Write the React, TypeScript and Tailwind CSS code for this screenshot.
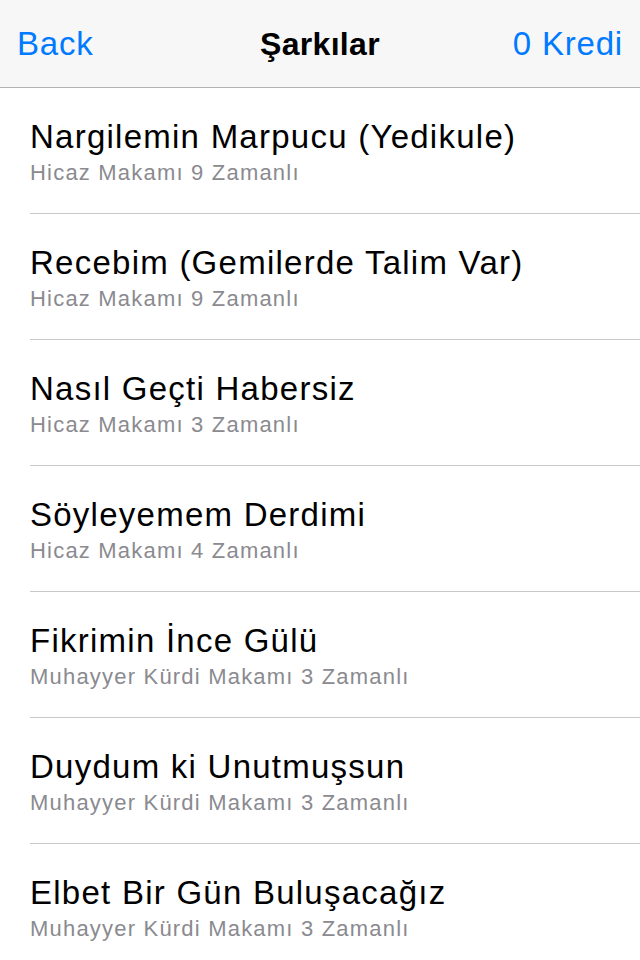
const songs = [
  { title: 'Nargilemin Marpucu (Yedikule)', sub: 'Hicaz Makamı 9 Zamanlı' },
  { title: 'Recebim (Gemilerde Talim Var)', sub: 'Hicaz Makamı 9 Zamanlı' },
  { title: 'Nasıl Geçti Habersiz', sub: 'Hicaz Makamı 3 Zamanlı' },
  { title: 'Söyleyemem Derdimi', sub: 'Hicaz Makamı 4 Zamanlı' },
  { title: 'Fikrimin İnce Gülü', sub: 'Muhayyer Kürdi Makamı 3 Zamanlı' },
  { title: 'Duydum ki Unutmuşsun', sub: 'Muhayyer Kürdi Makamı 3 Zamanlı' },
  { title: 'Elbet Bir Gün Buluşacağız', sub: 'Muhayyer Kürdi Makamı 3 Zamanlı' },
]

export default function App() {
  return (
    <div className="w-[640px] h-[960px] overflow-hidden bg-white font-['Liberation_Sans',Arial,sans-serif]">
      {/* Nav bar */}
      <header className="h-[88px] bg-[#f7f7f8] border-b border-[#b2b2b2] flex items-center justify-between px-[17px] relative">
        <span className="text-[33px] leading-[38px] tracking-[0.8px] text-[#007aff]">Back</span>
        <h1 className="absolute left-0 right-0 text-center text-[32px] leading-[38px] tracking-[0.3px] font-bold text-black pointer-events-none">Şarkılar</h1>
        <span className="text-[33px] leading-[38px] tracking-[0.8px] text-[#007aff]">0 Kredi</span>
      </header>

      {/* Song list */}
      <ul>
        {songs.map((s) => (
          <li key={s.title} className="pl-[30px]">
            <div className="h-[126px] border-b border-[#c8c7cc] pt-[30px]">
              <div className="text-[33px] leading-[38px] tracking-[1.25px] text-black">{s.title}</div>
              <div className="mt-[5px] text-[22px] leading-[24px] tracking-[1.2px] text-[#8a8a8f]">{s.sub}</div>
            </div>
          </li>
        ))}
      </ul>
    </div>
  )
}
